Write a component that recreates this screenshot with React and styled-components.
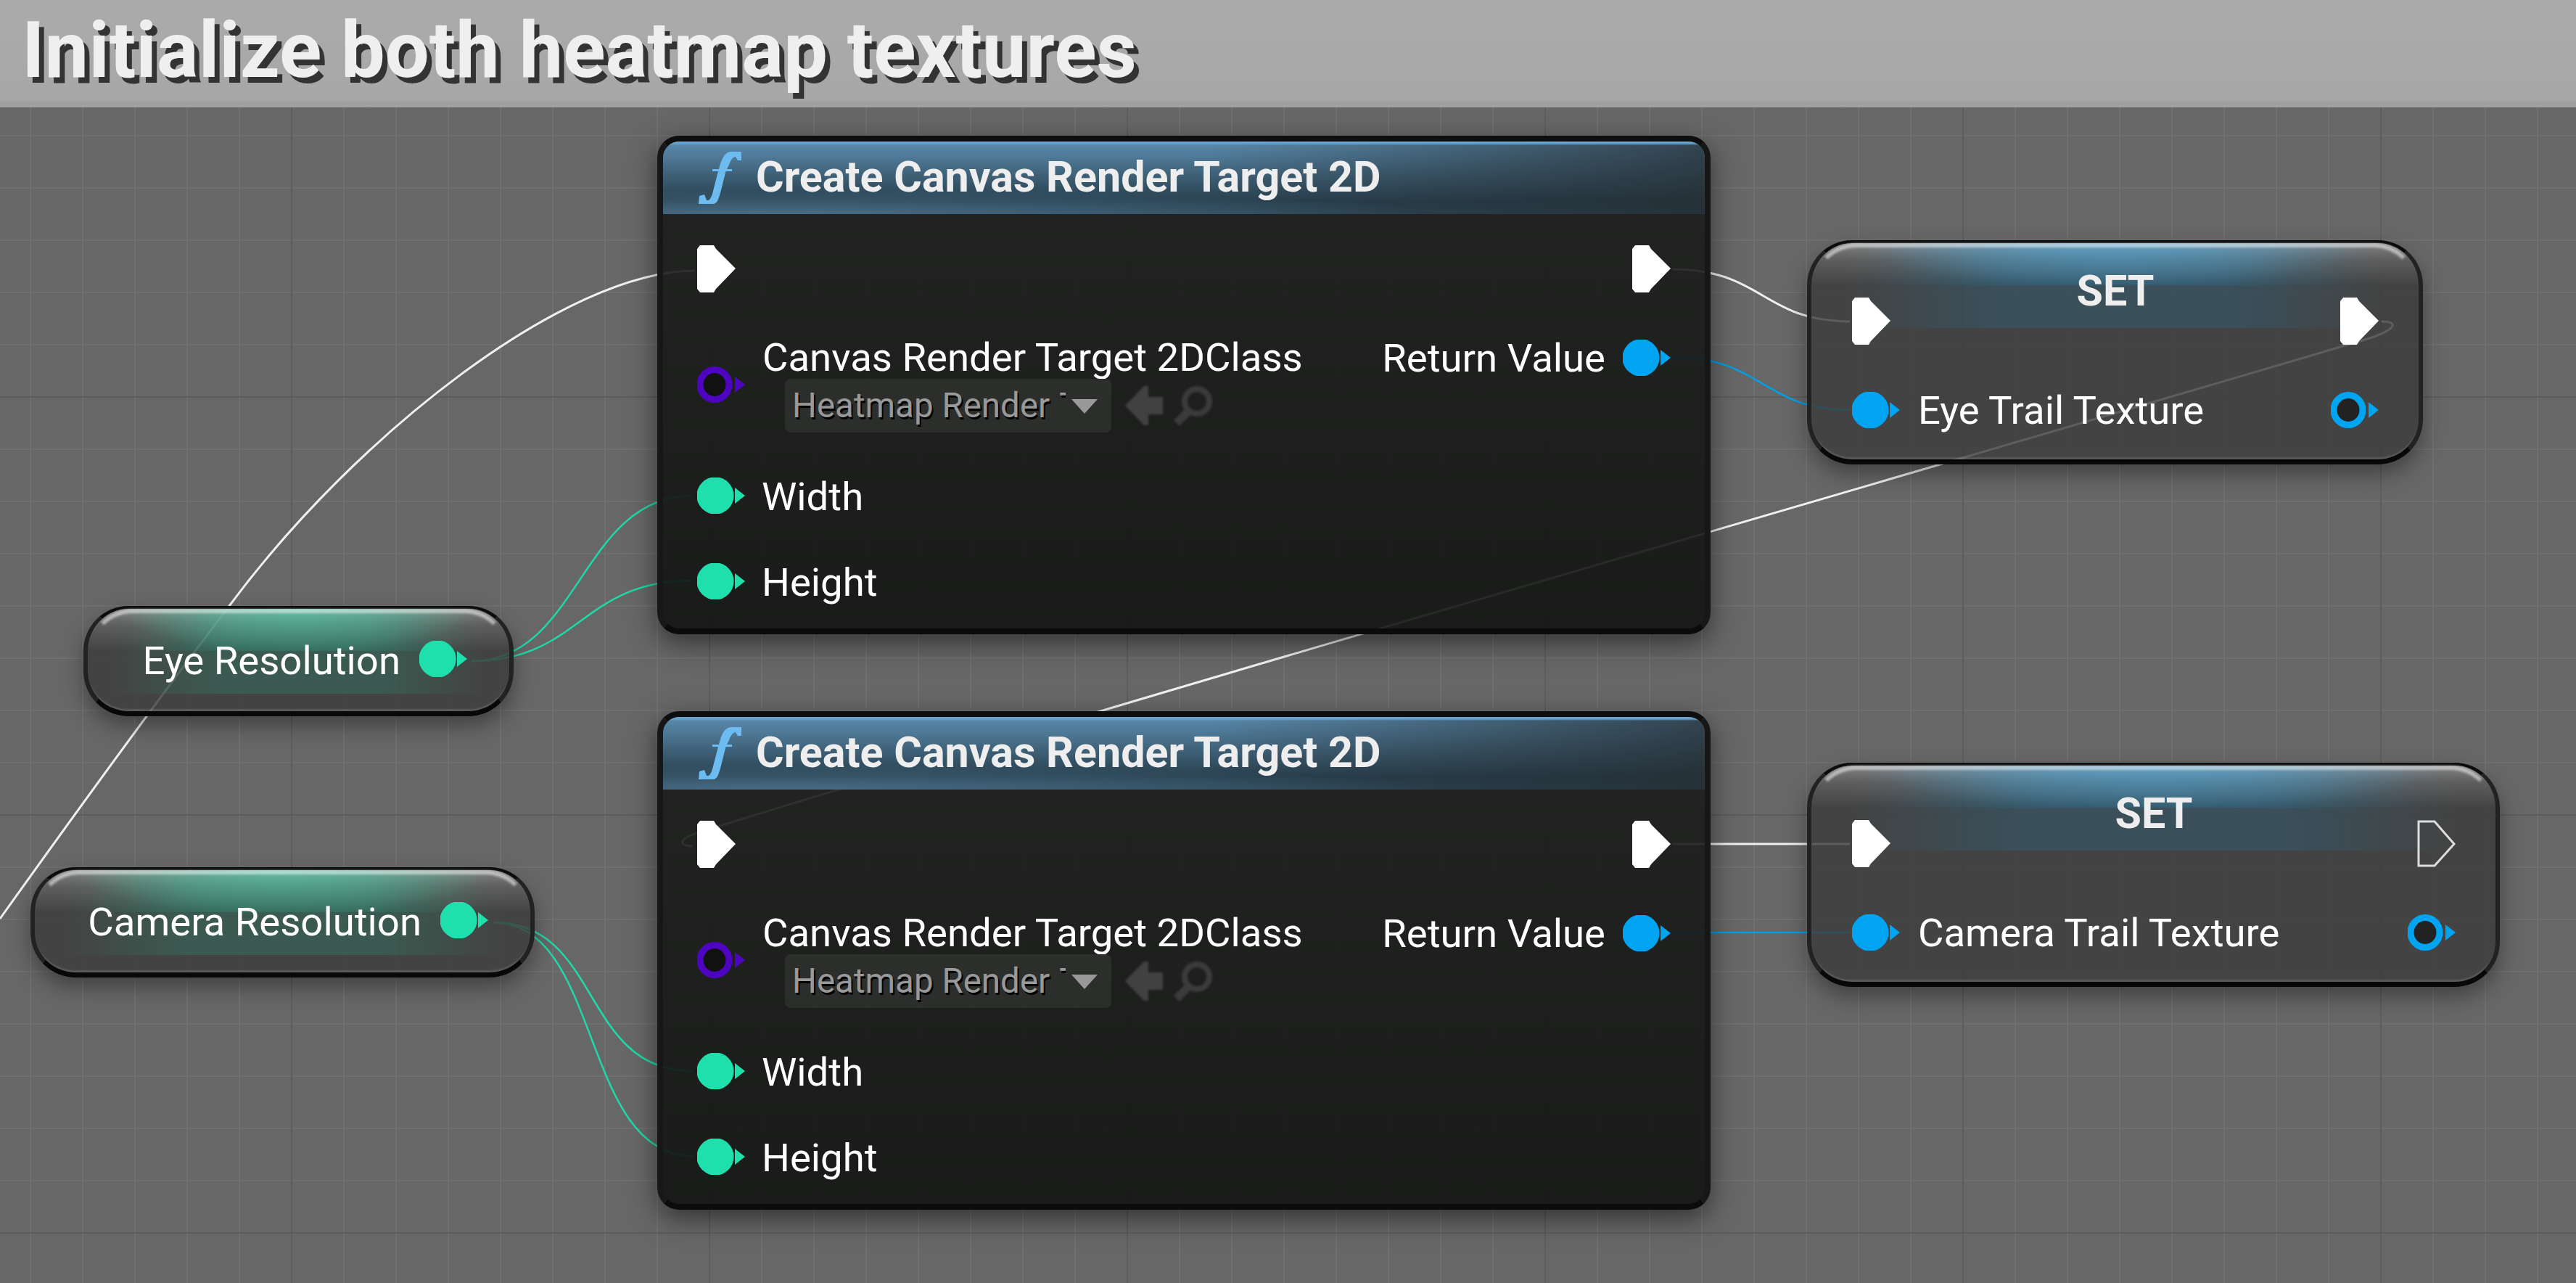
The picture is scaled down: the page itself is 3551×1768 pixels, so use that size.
import React from "react";
import styled, { createGlobalStyle } from "styled-components";

const Global = createGlobalStyle`
  html, body { margin: 0; padding: 0; background: #676767; }
  * { box-sizing: border-box; }
`;

const Page = styled.div`
  width: 3551px; height: 1768px; overflow: hidden;
  display: flex; flex-direction: column;
  font-family: Roboto, "Liberation Sans", sans-serif;
`;
const TitleBand = styled.header`
  height: 148px; flex: none; display: flex; align-items: flex-start;
  padding: 0 0 0 30px;
  background: linear-gradient(#ababab, #a7a7a7 93%, #9e9e9e 96%, #a2a2a2);
`;
const TitleText = styled.h1`
  margin: 0; font-size: 108px; line-height: 138px; font-weight: 700; color: #efefef;
  text-shadow: 7px 8px 0 #333;
  white-space: nowrap;
`;
const Canvas = styled.main`
  position: relative; flex: 1; overflow: hidden;
  background-color: #676767;
  background-image:
    linear-gradient(to right, #5c5c5c 2px, transparent 2px),
    linear-gradient(to bottom, #5c5c5c 2px, transparent 2px),
    linear-gradient(to right, #6f6f6f 2px, transparent 2px),
    linear-gradient(to bottom, #6f6f6f 2px, transparent 2px);
  background-size: 576px 576px, 576px 576px, 72px 72px, 72px 72px;
  background-position: 401px 0, 0 398px, 41px 0, 0 38px;
`;
const WireLayer = styled.svg`
  position: absolute; left: 0; top: 0; width: 3551px; height: 1620px;
`;

const FuncNode = styled.section`
  position: absolute; left: ${p => p.$x}px; top: ${p => p.$y}px;
  width: 1452px; height: 687px;
  border-radius: 30px; overflow: hidden;
  border-style: solid; border-width: 8px;
  border-color: #0e0e0e #161716 #0b0b0b #161716;
  background: linear-gradient(rgba(27,29,27,.9), rgba(17,19,17,.9));
  box-shadow: 0 12px 36px rgba(0,0,0,.5);
  display: flex; flex-direction: column;
`;
const FuncHeader = styled.div`
  height: 100px; flex: none; display: flex; align-items: flex-start;
  padding: 14px 0 0 49px; gap: 19px;
  background:
    radial-gradient(ellipse 62% 34px at 12% 100%, rgba(88,130,160,.65), transparent),
    linear-gradient(to right, transparent 52%, rgba(36,42,46,.72) 100%),
    linear-gradient(#5b8cae 0, #4f7a98 20%, #3b5b70 52%, #28404f 82%, #2c4656 100%);
  box-shadow: inset 0 5px 2px -1px #68a3cf;
`;
const FuncTitle = styled.div`
  font-size: 59.200px; line-height: 70px; font-weight: 700; color: #eeeeee; white-space: nowrap;
`;
const FuncBody = styled.div`
  flex: 1; display: flex; flex-direction: column;
  padding: 43px 47px 0 47px;
`;
const ExecRow = styled.div`
  height: 65px; flex: none; display: flex; justify-content: space-between; align-items: center;
`;
const ClassRow = styled.div`
  height: 194px; margin-top: 30px; flex: none; display: flex; justify-content: space-between; align-items: center; gap: 24px;
`;
const ClassColumn = styled.div`
  flex: 1; align-self: flex-start; display: flex; flex-direction: column; padding-top: 24px;
`;
const ClassRight = styled.div`
  align-self: flex-start; display: flex; align-items: center; gap: 24px; padding-top: 28px;
`;
const InputRow = styled.div`
  height: 50px; flex: none; margin-top: ${p => p.$top}px; display: flex; align-items: center; gap: 23px;
`;
const Label = styled.span`
  font-size: 54.500px; line-height: 64px; font-weight: 400; color: #fff; white-space: nowrap;
  padding-top: ${p => p.$nudge ?? 2}px;
`;
const DropRow = styled.div`
  display: flex; align-items: center; margin: -2px 0 0 31px; gap: 19px; height: 74px;
`;
const Dropdown = styled.div`
  width: 450px; height: 74px; border-radius: 8px; background: #2c2e2c;
  display: flex; align-items: center; padding-left: 10px; gap: 8px;
`;
const DropText = styled.span`
  width: 377px; overflow: hidden; white-space: nowrap; display: block;
  font-size: 47.500px; line-height: 60px; color: #999; text-shadow: 2px 3px 0 #000;
`;
const DropTail = styled.span`
  margin-left: 13px;
`;
const Tools = styled.div`
  display: flex; align-items: center; gap: 14px; filter: blur(1.500px);
`;

const VarNode = styled.section`
  position: absolute; left: ${p => p.$x}px; top: ${p => p.$y}px;
  width: ${p => p.$w}px; height: ${p => p.$h}px;
  border-radius: ${p => p.$r}px;
  border-style: solid; border-width: 4px 6px 7px 6px;
  border-color: #0c0c0c #222 #080808 #222;
  background:
    radial-gradient(ellipse 42% 62px at 50% 0, ${p => p.$tint}, transparent),
    linear-gradient(rgba(255,255,255,.34) 0, rgba(255,255,255,.15) 22px, rgba(255,255,255,0) 58px),
    linear-gradient(to right, transparent 10%, ${p => p.$band} 34%, ${p => p.$band} 66%, transparent 90%) 0 0 / 100% 58px no-repeat,
    linear-gradient(to right, transparent 6%, ${p => p.$band} 30%, ${p => p.$band} 70%, transparent 94%) 0 0 / 100% 117px no-repeat,
    rgba(60,60,60,.82);
  box-shadow: 0 14px 28px rgba(0,0,0,.35), inset 0 -5px 2px -2px rgba(255,255,255,.12);
  &::before {
    content: ""; position: absolute; inset: 0; border-radius: inherit;
    border-style: solid; border-width: 6px 6px 0 6px;
    border-color: rgba(255,255,255,.5) transparent transparent transparent;
    filter: blur(1.500px);
  }
`;
const SetInner = styled.div`
  position: relative; height: 100%; display: flex; flex-direction: column; padding: 36px 55px 0 56px;
`;
const SetTop = styled.div`
  height: 104px; flex: none; display: flex; justify-content: space-between; align-items: flex-end;
`;
const SetTitle = styled.div`
  align-self: flex-start; font-size: 59.200px; line-height: 60px; font-weight: 700; color: #eee;
`;
const SetBottom = styled.div`
  height: 50px; margin-top: 65px; flex: none; display: flex; justify-content: space-between; align-items: center;
`;
const SetField = styled.div`
  display: flex; align-items: center; gap: 25px;
`;
const VarInner = styled.div`
  position: relative; height: 100%; display: flex; align-items: center; justify-content: flex-end; gap: 26px;
  padding: 0 58px 4px 0;
`;
const PinSvg = styled.svg`
  flex: none; filter: blur(.7px);
`;

const ExecPin = ({ hollow }) => (
  <PinSvg width="53" height="65" viewBox="0 0 53 65">
    {hollow ? (
      <polygon points="2,2 24,2 51,33 24,63 2,63" fill="none" stroke="#ddd" strokeWidth="3" />
    ) : (
      <polygon points="0,5 4,0 23,0 26,5 53,32 26,60 23,65 4,65 0,60" fill="#fff" />
    )}
  </PinSvg>
);
const DataPin = ({ color, hollow, inner = "#111" }) => (
  <PinSvg width="66" height="50" viewBox="0 0 66 50">
    {hollow ? (
      <ellipse cx="24" cy="25" rx="20" ry="20.500" fill={inner} stroke={color} strokeWidth="9" />
    ) : (
      <circle cx="25" cy="25" r="25.600" fill={color} />
    )}
    <polygon points="52,14 66,25 52,36" fill={color} />
  </PinSvg>
);
const FuncIcon = () => (
  <PinSvg width="60" height="74" viewBox="0 0 60 74">
    <path d="M59 0 L59 12 L54 12 L51 7 C47 7 44 12 42 18 L39 24 L46 24 L46 27 L37.500 27 L31 53 C28 64 26 72 20 72 L0 72 L1 61 L8 59 L11 67 C15 68 17 64 19 58 L27 27 L19 27 L19 24 L28 24 C31 12 35 1 44 0 Z" fill="#6cbcf2" />
  </PinSvg>
);
const Caret = () => (
  <svg width="36" height="22" viewBox="0 0 36 22" style={{ flex: "none" }}>
    <polygon points="0,2 36,2 18,22" fill="#999" />
  </svg>
);
const BackIcon = () => (
  <svg width="52" height="54" viewBox="0 0 52 54" style={{ flex: "none" }}>
    <path d="M26 0 L32 0 L32 15 L52 15 L52 39 L32 39 L32 54 L26 54 L0 27 Z" fill="#414141" />
  </svg>
);
const SearchIcon = () => (
  <svg width="56" height="56" viewBox="0 0 56 56" style={{ flex: "none" }}>
    <circle cx="33" cy="22" r="17" fill="none" stroke="#3b3b3b" strokeWidth="8" />
    <path d="M21 36 L5 52" stroke="#3b3b3b" strokeWidth="11" />
  </svg>
);

const FunctionNode = ({ x, y }) => (
  <FuncNode $x={x} $y={y}>
    <FuncHeader>
      <FuncIcon />
      <FuncTitle>Create Canvas Render Target 2D</FuncTitle>
    </FuncHeader>
    <FuncBody>
      <ExecRow><ExecPin /><ExecPin /></ExecRow>
      <ClassRow>
        <DataPin color="#4d05c2" hollow />
        <ClassColumn>
          <Label $nudge={3}>Canvas Render Target 2DClass</Label>
          <DropRow>
            <Dropdown>
              <DropText>Heatmap Render<DropTail>Target</DropTail></DropText>
              <Caret />
            </Dropdown>
            <Tools><BackIcon /><SearchIcon /></Tools>
          </DropRow>
        </ClassColumn>
        <ClassRight>
          <Label $nudge={0}>Return Value</Label>
          <DataPin color="#00a4f0" />
        </ClassRight>
      </ClassRow>
      <InputRow $top={31}><DataPin color="#1fe0ac" /><Label>Width</Label></InputRow>
      <InputRow $top={68}><DataPin color="#1fe0ac" /><Label>Height</Label></InputRow>
    </FuncBody>
  </FuncNode>
);

const SetNode = ({ x, y, w, label, hollowExec }) => (
  <VarNode $x={x} $y={y} $w={w} $h={309} $r={62} $band="rgba(30,120,165,.24)" $tint="rgba(80,170,220,.6)">
    <SetInner>
      <SetTop>
        <ExecPin />
        <SetTitle>SET</SetTitle>
        <ExecPin hollow={hollowExec} />
      </SetTop>
      <SetBottom>
        <SetField><DataPin color="#00a4f0" /><Label $nudge={0}>{label}</Label></SetField>
        <DataPin color="#00a4f0" hollow inner="#222" />
      </SetBottom>
    </SetInner>
  </VarNode>
);

const GetNode = ({ x, y, w, label }) => (
  <VarNode $x={x} $y={y} $w={w} $h={152} $r={62} $band="rgba(30,170,130,.22)" $tint="rgba(80,210,170,.55)">
    <VarInner>
      <Label $nudge={5}>{label}</Label>
      <DataPin color="#1fe0ac" />
    </VarInner>
  </VarNode>
);

export default function App() {
  return (
    <Page>
      <Global />
      <TitleBand><TitleText>Initialize both heatmap textures</TitleText></TitleBand>
      <Canvas>
        <WireLayer viewBox="0 148 3551 1620" fill="none">
          <path d="M958 373 C780 373 490 600 316 835 Q190 1000 0 1266" stroke="#f0f0f0" strokeWidth="3" />
          <path d="M2305 371 C2430 371 2430 443 2550 443" stroke="#f0f0f0" strokeWidth="3" />
          <path d="M2305 492 C2430 492 2430 565 2550 565" stroke="#009fe4" strokeWidth="2.500" />
          <path d="M3283 443 C3305 443 3305 452 3270 465 C2800 605 1500 980 960 1148 C935 1157 935 1166 955 1166" stroke="#f0f0f0" strokeWidth="3" />
          <path d="M2305 1163 L2550 1163" stroke="#f0f0f0" strokeWidth="3" />
          <path d="M2305 1285 L2550 1285" stroke="#009fe4" strokeWidth="2.500" />
          <path d="M650 911 C800 911 800 683 955 683" stroke="#1fd8a8" strokeWidth="2.500" />
          <path d="M650 911 C800 911 800 800 955 800" stroke="#1fd8a8" strokeWidth="2.500" />
          <path d="M680 1271 C830 1271 800 1476 955 1476" stroke="#1fd8a8" strokeWidth="2.500" />
          <path d="M680 1271 C830 1271 800 1593 955 1593" stroke="#1fd8a8" strokeWidth="2.500" />
        </WireLayer>
        <FunctionNode x={906} y={39} />
        <FunctionNode x={906} y={832} />
        <SetNode x={2491} y={183} w={849} label="Eye Trail Texture" />
        <SetNode x={2491} y={903} w={955} label="Camera Trail Texture" hollowExec />
        <GetNode x={115} y={687} w={593} label="Eye Resolution" />
        <GetNode x={42} y={1047} w={695} label="Camera Resolution" />
      </Canvas>
    </Page>
  );
}
